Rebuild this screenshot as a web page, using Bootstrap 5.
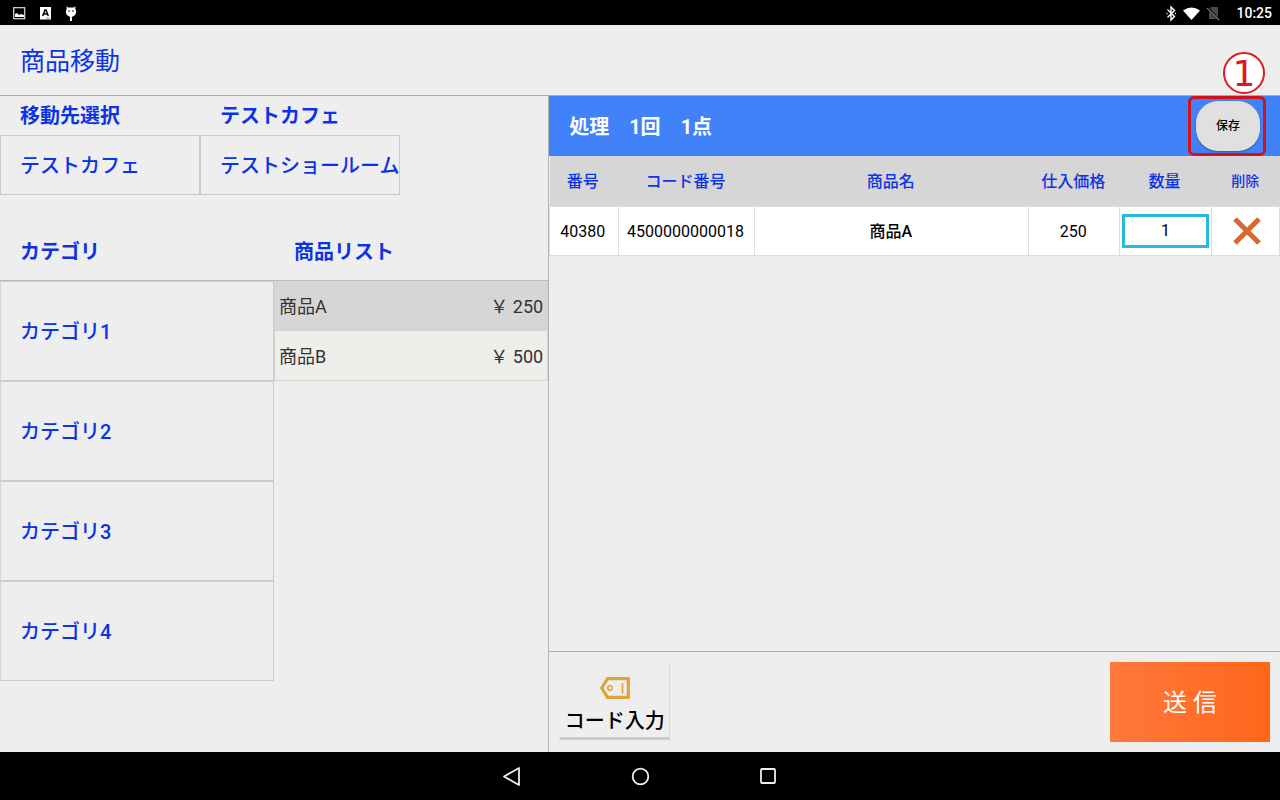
<!DOCTYPE html>
<html lang="ja">
<head>
<meta charset="utf-8">
<meta name="viewport" content="width=device-width, initial-scale=1">
<title>商品移動</title>
<link href="https://cdn.jsdelivr.net/npm/bootstrap@5.3.0/dist/css/bootstrap.min.css" rel="stylesheet">
<style>
  body { font-family: Roboto, "Noto Sans CJK JP", sans-serif; background: #eee; color: #000; line-height: 24px; }
  a, button { color: inherit; }
  .ink { color: #0c34e4; }
  .status-bar { height: 25px; padding: 0 8px 0 12px; font-size: 14px; font-weight: 500; }
  .title-bar { height: 71px; padding: 4px 20px 0; border-bottom: 1px solid #a9abab; }
  .title-bar h1 { font-size: 25px; font-weight: 400; }
  .fs-main { font-size: 20px; }
  .left-pane { flex: 3 1 0; min-width: 0; border-right: 1px solid #b4b4b4; }
  .right-pane { flex: 4 1 0; min-width: 0; }
  .dest-col { width: 200px; padding-left: 20px; }
  .dest-head { height: 39px; }
  .dest-cell { height: 60px; padding: 2px 0 0 19px; border: 1px solid #cbcbcb; font-size: 20px; font-weight: 500; white-space: nowrap; overflow: hidden; text-align: left; }
  .list-head { height: 60px; margin-top: 26px; padding-top: 2px; border-bottom: 1px solid #bdbdbd; }
  .cat-cell { height: 100px; padding: 2px 19px 0; border: 1px solid #cbcbcb; border-left-color: #d6d6d6; font-size: 20px; font-weight: 500; text-align: left; }
  .item-cell { height: 50px; padding: 2px 4px 0; border: 1px solid #d2d2d2; border-width: 0 1px 1px; background: #eeeeea; color: #333; font-size: 18px; }
  .item-cell.selected { background: #d6d6d6; }
  .summary-bar { height: 60px; padding: 0 20px; background: #4182f9; color: #fff; font-size: 20px; font-weight: 700; gap: 20px; }
  .summary-bar > span { padding-top: 2px; }
  .save-btn { width: 64px; height: 50px; border: 0; border-radius: 22px; background: #e0e0e0; font-size: 12px; font-weight: 500; box-shadow: 0 1px 2px #0005; }
  .callout-box { top: 0; right: 14px; width: 78px; height: 60px; border: 3px solid #d0121f; border-radius: 6px; pointer-events: none; }
  .callout-no { bottom: 62px; right: 15px; width: 42px; height: 42px; border: 2px solid #e0181e; border-radius: 50%; background: #fff; color: #e0181e; font: 36px/40px "DejaVu Sans", sans-serif; }
  .goods { table-layout: fixed; text-align: center; font-size: 16px; }
  .goods th { height: 50px; padding: 2px 2px 0 0; background: #d6d6d6; font-weight: 500; }
  .goods td { height: 49px; padding: 2px 2px 0 0; background: #fff; border: 1px solid #dedede; }
  .goods td.tool-cell { padding: 0 2px; }
  .goods .w-s { width: 9.375%; } .goods .w-m { width: 18.75%; } .goods .w-l { width: 37.5%; } .goods .w-n { width: 12.5%; }
  .goods .th-del { padding: 0; font-size: 14px; }
  .qty { height: 34px; border: 3px solid #29b9e0; background: #fff; }
  .action-bar { padding: 10px; height: 101px; border-top: 1px solid #a9abab; }
  .code-btn { width: 111px; height: 76px; background: #eee; border: 1px solid #eaeaea; border-right-color: #d8d8d8; border-bottom: 3px solid #ccc; font-size: 20px; font-weight: 500; white-space: nowrap; }
  .send-btn { width: 160px; height: 80px; padding-top: 2px; border: 0; background: linear-gradient(90deg, #ff793c, #ff661b); color: #fff; font-size: 24px; }
  .nav-keys { height: 48px; gap: 104px; }
  .nav-keys button { width: 24px; height: 24px; }
</style>
</head>
<body class="d-flex flex-column min-vh-100">
<div class="status-bar bg-black text-white d-flex align-items-center justify-content-between">
  <div class="d-flex align-items-center">
    <svg width="72" height="20" viewBox="0 0 72 20" aria-hidden="true">
      <rect x="1.7" y="4.7" width="11" height="11" fill="none" stroke="#ddd" stroke-width="1.2"/>
      <path d="M3 14v-3l2-1 2 2 2-1 3 1v2z" fill="#fff"/>
      <rect x="28" y="4" width="11" height="12.500" fill="#fff"/>
      <path d="M30.700 13l2.300-6h1l2.300 6M31.500 11h4" fill="none" stroke="#000" stroke-width="1.500"/>
      <path d="M34 15h4" stroke="#999"/>
      <path d="M54.500 3l1.500 1.500h6L63.500 3l-.3 2.500q2 3.500-.2 6.500l-3 2v4h-2v-4l-3-2q-2.200-3-.2-6.500z" fill="#fff"/>
      <circle cx="57" cy="8" r=".8"/><circle cx="61" cy="8" r=".8"/>
    </svg>
  </div>
  <div class="d-flex align-items-center">
    <svg class="me-3" width="56" height="20" viewBox="0 0 56 20" aria-hidden="true">
      <path d="M3.500 6.500l7 7-3.500 3.500V4l3.500 3.500-7 7" fill="none" stroke="#fff" stroke-width="1.400"/>
      <path d="M2.500 10.500h1M11 10.500h1" stroke="#fff" stroke-width="1.500"/>
      <path d="M19 7.500Q27.500 1.500 36 7.500L27.500 17z" fill="#fff"/>
      <path d="M47 4h7v12h-9V7z" fill="#4a4a4a"/>
      <path d="M43 4l12 13" stroke="#000" stroke-width="2.500"/><path d="M43 5l12 12" stroke="#777" stroke-width="1.200"/>
    </svg>
    <span>10:25</span>
  </div>
</div>
<header class="title-bar d-flex align-items-center"><h1 class="ink m-0">商品移動</h1></header>

<main class="d-flex flex-grow-1">
  <section class="left-pane ink">
    <div class="dest-head d-flex align-items-center fs-main fw-bold">
      <div class="dest-col">移動先選択</div><div class="dest-col">テストカフェ</div>
    </div>
    <div class="d-flex">
      <button type="button" class="dest-col dest-cell bg-transparent">テストカフェ</button>
      <button type="button" class="dest-col dest-cell bg-transparent">テストショールーム</button>
    </div>
    <div class="list-head row g-0 align-items-center fs-main fw-bold">
      <div class="col-6 ps-3"><span class="ps-1">カテゴリ</span></div><div class="col-6 ps-3"><span class="ps-1">商品リスト</span></div>
    </div>
    <div class="row g-0">
      <div class="col-6 d-flex flex-column">
        <button type="button" class="cat-cell bg-transparent">カテゴリ1</button>
        <button type="button" class="cat-cell bg-transparent">カテゴリ2</button>
        <button type="button" class="cat-cell bg-transparent">カテゴリ3</button>
        <button type="button" class="cat-cell bg-transparent">カテゴリ4</button>
      </div>
      <div class="col-6 d-flex flex-column">
        <button type="button" class="item-cell selected d-flex justify-content-between align-items-center"><span>商品A</span><span>&#xFFE5; 250</span></button>
        <button type="button" class="item-cell d-flex justify-content-between align-items-center"><span>商品B</span><span>&#xFFE5; 500</span></button>
      </div>
    </div>
  </section>

  <section class="right-pane d-flex flex-column">
    <div class="summary-bar d-flex align-items-center position-relative">
      <span>処理</span><span>1回</span><span>1点</span>
      <button type="button" class="save-btn ms-auto text-black">保存</button>
      <div class="callout-box position-absolute"></div>
      <div class="callout-no position-absolute d-flex justify-content-center">1</div>
    </div>
    <table class="goods w-100">
      <thead class="ink">
        <tr><th class="w-s">番号</th><th class="w-m">コード番号</th><th class="w-l">商品名</th><th class="w-n">仕入価格</th><th class="w-n"><label for="qty">数量</label></th><th class="w-s th-del">削除</th></tr>
      </thead>
      <tbody>
        <tr>
          <td>40380</td><td>4500000000018</td><td class="fw-medium">商品A</td><td>250</td>
          <td class="tool-cell"><input id="qty" class="qty w-100 text-center p-0 d-block" type="text" value="1"></td>
          <td class="tool-cell"><button type="button" class="btn p-0 border-0 d-inline-flex ms-1" aria-label="削除"><svg width="28" height="28" viewBox="0 0 28 28"><path d="M2 2l24 24M26 2L2 26" stroke="#d9682f" stroke-width="5"/></svg></button></td>
        </tr>
      </tbody>
    </table>
    <div class="action-bar d-flex justify-content-between align-items-center mt-auto">
      <button type="button" class="code-btn d-flex flex-column align-items-center justify-content-between p-0 pt-2 text-black">
        <svg class="mt-1" width="30" height="22" viewBox="0 0 30 22" aria-hidden="true"><path d="M7.500 1.700H28.300V20.300H7.500L1.800 11z" fill="none" stroke="#dfa437" stroke-width="3.200"/><circle cx="10" cy="11" r="2.200" fill="none" stroke="#dfa437" stroke-width="1.500"/><path d="M22.500 6v10.500" stroke="#dfa437" stroke-width="1.700"/></svg>
        <span class="pb-1">コード入力</span>
      </button>
      <button type="button" class="send-btn">送 信</button>
    </div>
  </section>
</main>

<nav class="nav-keys bg-black d-flex justify-content-center align-items-center" aria-label="システム">
  <button type="button" class="btn p-0 border-0 d-flex" aria-label="戻る"><svg width="24" height="24" viewBox="0 0 24 24"><path d="M19 4v17L4 12.500z" fill="none" stroke="#eee" stroke-width="1.800" stroke-linejoin="round"/></svg></button>
  <button type="button" class="btn p-0 border-0 d-flex" aria-label="ホーム"><svg width="24" height="24" viewBox="0 0 24 24"><circle cx="12.500" cy="12.500" r="7.800" fill="none" stroke="#eee" stroke-width="1.800"/></svg></button>
  <button type="button" class="btn p-0 border-0 d-flex" aria-label="履歴"><svg width="24" height="24" viewBox="0 0 24 24"><rect x="5" y="5" width="14" height="14" rx="1" fill="none" stroke="#eee" stroke-width="1.800"/></svg></button>
</nav>
<script src="https://cdn.jsdelivr.net/npm/bootstrap@5.3.0/dist/js/bootstrap.bundle.min.js"></script>
</body>
</html>
